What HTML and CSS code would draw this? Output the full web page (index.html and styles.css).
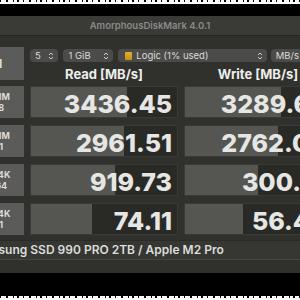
FILE: index.html
```html
<!DOCTYPE html>
<html lang="en">
<head>
  <meta charset="UTF-8" />
  <title>AmorphousDiskMark</title>
  <link rel="stylesheet" href="styles.css">
</head>
<body>
  <div class="dots"></div>
  <div class="frame-gap"></div>

  <div class="window">
    <div class="titlebar">AmorphousDiskMark 4.0.1</div>

    <div class="content">
      <div class="top">
        <button class="label-btn all">All</button>
        <div class="controls">
          <div class="selects">
            <div class="select s-count"><span>5</span><svg class="chev" viewBox="0 0 6 10"><path d="M1 4 L3 2 L5 4 M1 6 L3 8 L5 6" /></svg></div>
            <div class="select s-size"><span>1 GiB</span><svg class="chev" viewBox="0 0 6 10"><path d="M1 4 L3 2 L5 4 M1 6 L3 8 L5 6" /></svg></div>
            <div class="select s-disk"><span class="disk-icon"></span><span>Logic (1% used)</span><svg class="chev" viewBox="0 0 6 10"><path d="M1 4 L3 2 L5 4 M1 6 L3 8 L5 6" /></svg></div>
            <div class="select s-unit"><span>MB/s</span></div>
          </div>
          <div class="heads">
            <div>Read [MB/s]</div>
            <div>Write [MB/s]</div>
          </div>
        </div>
      </div>

      <div class="rows">
        <button class="label-btn">SEQ1M<br>QD8</button>
        <div class="cell" style="--p:65.5%">3436.45</div>
        <div class="cell" style="--p:65.5%">3289.62</div>

        <button class="label-btn">SEQ1M<br>QD1</button>
        <div class="cell" style="--p:64%">2961.51</div>
        <div class="cell" style="--p:63.5%">2762.08</div>

        <button class="label-btn">RND4K<br>QD64</button>
        <div class="cell" style="--p:57.4%">919.73</div>
        <div class="cell" style="--p:50%">300.71</div>

        <button class="label-btn">RND4K<br>QD1</button>
        <div class="cell" style="--p:42%">74.11</div>
        <div class="cell" style="--p:40%">56.42</div>
      </div>

      <div class="info">Samsung SSD 990 PRO 2TB / Apple M2 Pro</div>
    </div>
  </div>

  <div class="frame-gap bottom"></div>
  <div class="dots"></div>
</body>
</html>
```

FILE: styles.css
```css
:root {
  --frame: #000000;
  --title-bg: #3a3b37;
  --win-bg: #30312d;
  --btn-bg: #5b5b59;
  --select-bg: #4b4b49;
  --cell-bg: #292a26;
  --cell-border: #393a36;
  --bar: #555652;
  --text: #e6e6e4;
}

body {
  margin: 0;
  width: 300px;
  height: 300px;
  overflow: hidden;
  background-color: var(--frame);
  font-family: Inter, 'Liberation Sans', sans-serif;
  color: var(--text);
}

.dots {
  height: 4px;
  background-color: #ffffff;
  background-image: repeating-linear-gradient(90deg,
    #000 0 1px, transparent 1px 6px, #000 6px 8px, transparent 8px 13px,
    #000 13px 14px, transparent 14px 17px, #000 17px 19px, transparent 19px 23px);
  background-size: 100% 2px;
  background-repeat: no-repeat;
}

.frame-gap {
  height: 12px;
}

.frame-gap.bottom {
  height: 23px;
}

.window {
  margin-left: -35px;
  width: 370px;
  height: 257px;
  background-color: var(--win-bg);
}

.titlebar {
  height: 19px;
  line-height: 19px;
  text-align: center;
  font-size: 9.5px;
  font-weight: 600;
  color: #8a8a87;
  background-color: var(--title-bg);
  border-bottom: 1px solid #262723;
}

.content {
  padding-top: 11px;
}

.top,
.rows {
  display: grid;
  grid-template-columns: 59px 148px 148px;
  column-gap: 6px;
}

.label-btn {
  border: none;
  padding: 0;
  margin: 0;
  background-color: var(--btn-bg);
  color: #dcdcda;
  font-family: inherit;
  font-size: 9px;
  font-weight: 700;
  line-height: 11px;
  text-align: center;
}

.label-btn.all {
  height: 33px;
  font-size: 12px;
}

.controls {
  grid-column: 2 / 4;
  padding-top: 2px;
}

.selects {
  display: flex;
  height: 13px;
}

.select {
  display: flex;
  align-items: center;
  box-sizing: border-box;
  height: 13px;
  padding: 0 4px 0 5px;
  margin-right: 5px;
  border-radius: 4px;
  background-color: var(--select-bg);
  font-size: 9.5px;
  color: #dcdcda;
}

.select span {
  flex: 1;
}

.s-count { width: 30px; }
.s-size { width: 53px; }
.s-disk { width: 159px; margin-right: 4px; padding-left: 7px; }
.s-unit { width: 60px; }

.s-disk .disk-icon {
  flex: none;
  width: 7px;
  height: 8px;
  margin-right: 4px;
  border-radius: 1px;
  background: linear-gradient(#e4b02f, #c98f1b);
}

.chev {
  width: 6px;
  height: 10px;
  fill: none;
  stroke: #cfcfcd;
  stroke-width: 1;
}

.heads {
  display: grid;
  grid-template-columns: 148px 148px;
  column-gap: 6px;
  height: 24px;
  align-items: center;
  font-size: 13px;
  font-weight: 700;
  text-align: center;
  color: #ededeb;
}

.rows {
  grid-auto-rows: 32px;
  row-gap: 7px;
}

.cell {
  box-sizing: border-box;
  display: flex;
  align-items: center;
  justify-content: flex-end;
  padding: 3px 5px 0 0;
  border: 1px solid var(--cell-border);
  background: linear-gradient(90deg, var(--bar) var(--p), var(--cell-bg) var(--p));
  font-size: 25px;
  font-weight: 800;
  color: var(--text);
}

.info {
  margin-top: 5px;
  height: 18px;
  line-height: 18px;
  padding-left: 8px;
  background-color: #363733;
  border-top: 1px solid #2a2b27;
  border-bottom: 1px solid #444541;
  font-size: 12px;
  font-weight: 600;
  color: #dcdcda;
}
```
